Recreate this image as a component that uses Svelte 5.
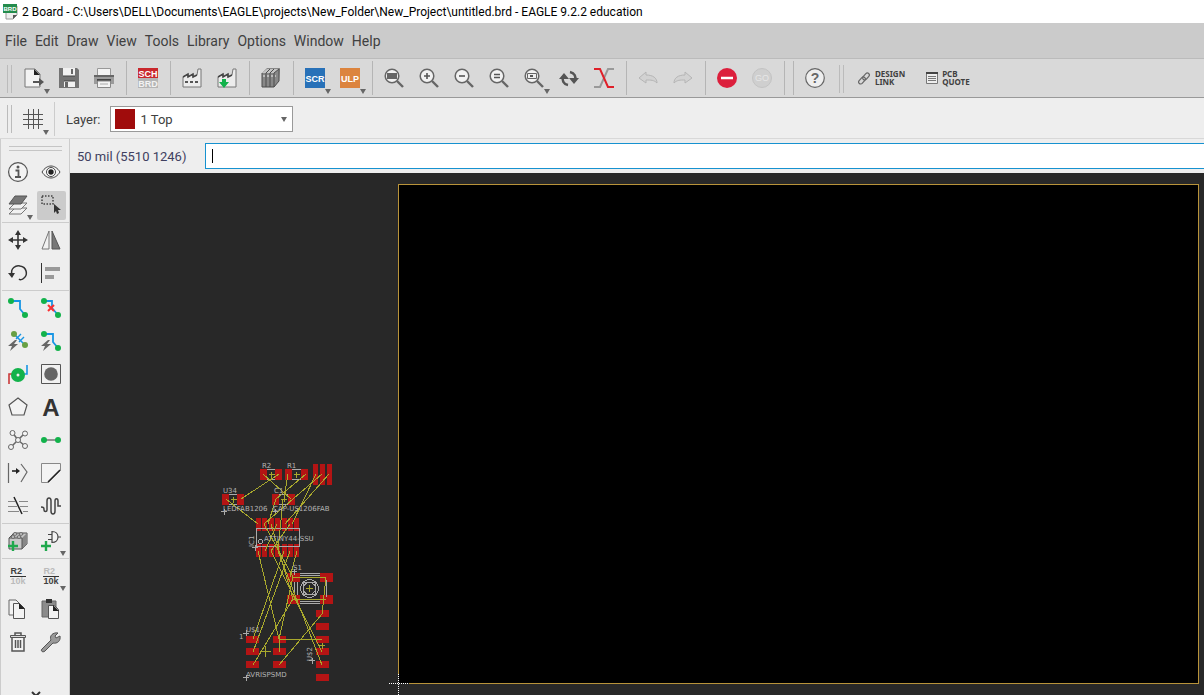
<script>
    const lens = '<circle cx="8" cy="8" r="6.8" fill="#f2f2f2" stroke="#666" stroke-width="1.5"/><path d="M13 13l6 6" stroke="#666" stroke-width="2.4"/>'
    const dot = (x, y, r = 3) => `<circle cx="${x}" cy="${y}" r="${r}" fill="#12b24b"/>`
    const plus = (x, y) => `<path d="M${x - 5} ${y}h10M${x} ${y - 5}v10" stroke="#1fa84c" stroke-width="2.4"/>`
    const bolt = '<path d="M7 9L0 15h4l-2 5 8-7H6l3-4z" fill="#666"/>'
    const factory = '<path d="M1 19V9l5-3v3l5-3v3l4-2 1-6h3v18z" fill="#ececec" stroke="#777"/><path d="M1 9l5-3v3l5-3v3l4-2" fill="none" stroke="#444" stroke-width="1.5"/>'
    const label = (x, y, size, fill, text) =>
        `<text x="${x}" y="${y}" font-size="${size}" font-weight="bold" font-family="Liberation Sans, sans-serif" text-anchor="middle" fill="${fill}">${text}</text>`

    const icons = {
        open: '<path d="M1 1h10l5 5v13H1z" fill="#f3f3f3" stroke="#777"/><path d="M10 1l6 6h-6z" fill="#222"/><path d="M9 14h7" stroke="#555" stroke-width="2"/><path d="M15 10l5 4-5 4z" fill="#555"/>',
        save: '<path d="M0 0h18l2 2v18H0z" fill="#737373"/><path d="M4 0h12v8H4zM5 13h11v6H5z" fill="#f1f1f1"/><path d="M4 8h12M5 13h11" stroke="#444"/><path d="M12 1h2v5h-2zM6 14h3v5H6z" fill="#666"/>',
        print: '<path d="M3.5.5h13v7h-13z" fill="#f3f3f3" stroke="#999"/><path d="M0 7h20v9H0z" fill="#9b9b9b"/><path d="M0 7h20v2H0z" fill="#666"/><path d="M3 11h14v2H3z" fill="#444"/><path d="M3.5 13h13v6.5h-13z" fill="#f3f3f3" stroke="#888"/><path d="M6 16h8" stroke="#aaa"/>',
        switch: `<path d="M0 0h20v10H0z" fill="#c9282d"/><path d="M0 10h20v10H0z" fill="#b5b5b5"/>${label(10, 8.5, 9, '#fff', 'SCH')}${label(10, 18.5, 9, '#f2f2f2', 'BRD')}`,
        cam: `${factory}<path d="M3 14h3m2 0h3m2 0h3" stroke="#555" stroke-width="2"/>`,
        fab: `${factory}<path d="M5 11h4v3h3l-5 6-5-6h3z" fill="#12b24b"/>`,
        library: '<path d="M1 5l5-5h13l-1 13-5 6H1z" fill="#888"/><path d="M1 5l5-4h12l-5 4z" fill="#c4c4c4"/><path d="M1 5v14h12l5-6V1M5 5v14M9 5v14M13 5v14M5 5l4-4M9 5l4-4M13 5l5-4" fill="none" stroke="#4d4d4d"/><path d="M2 8h2m2 0h2m2 0h2m2 0h1" stroke="#eee"/>',
        scr: `<path d="M0 0h20v20H0z" fill="#2871b8"/>${label(10, 13.5, 9, '#fff', 'SCR')}`,
        ulp: `<path d="M0 0h20v20H0z" fill="#dc843e"/>${label(10, 13.5, 9, '#fff', 'ULP')}`,
        zoomFit: `${lens}<path d="M3 5h10v6H3z" fill="#666"/>`,
        zoomIn: `${lens}<path d="M5 8h6M8 5v6" stroke="#555" stroke-width="1.6"/>`,
        zoomOut: `${lens}<path d="M5 8h6" stroke="#555" stroke-width="1.6"/>`,
        redraw: `${lens}<path d="M5 6.5h6M5 9.5h6" stroke="#555" stroke-width="1.4"/>`,
        zoomSelect: `${lens}<path d="M3.5 5.5h9v5h-9z" fill="#eee" stroke="#666"/><path d="M6 7h3v2H6z" fill="#555"/>`,
        refresh: '<path d="M9 17c-5-1-6-5-5-8M11 4c5 1 6 5 5 8" fill="none" stroke="#555" stroke-width="2.6"/><path d="M0 11l5-6 5 6zM10 10h10l-5 6z" fill="#555"/>',
        cross: '<path d="M0 19h6l8-18h6" fill="none" stroke="#999" stroke-width="2"/><path d="M0 1h6l8 18h6" fill="none" stroke="#df2029" stroke-width="2"/>',
        undo: '<path d="M1 10l7-6v3c7 0 11 3 11 8-3-3-6-3-11-3v3z" fill="#d2d2d2" stroke="#b5b5b5"/>',
        redo: '<path d="M19 10l-7-6v3C5 7 1 10 1 15c3-3 6-3 11-3v3z" fill="#d2d2d2" stroke="#b5b5b5"/>',
        stop: '<circle cx="10" cy="10" r="10" fill="#dc1f3c"/><path d="M4 10h12" stroke="#fff" stroke-width="2.5"/>',
        go: '<circle cx="10" cy="10" r="9.5" fill="#cfcfcf" stroke="#c3c3c3"/><text x="10" y="13" font-size="9" font-family="Liberation Sans, sans-serif" text-anchor="middle" fill="#e6e6e6">GO</text>',
        help: `<circle cx="10" cy="10" r="9.3" fill="#eee" stroke="#666" stroke-width="1.2"/>${label(10, 15, 14, '#666', '?')}`,
        link: '<g fill="none" stroke="#666" stroke-width="1.2"><rect x="4" y="6.5" width="8" height="4" rx="2" transform="rotate(-48 8 8.5)"/><rect x="0" y="10.5" width="8" height="4" rx="2" transform="rotate(-48 4 12.5)"/></g>',
        quote: '<path d="M1.5 4.5h11v11h-11z" fill="#eee" stroke="#777"/><path d="M1 5h12" stroke="#444" stroke-width="2"/><path d="M3 8.5h8M3 10.5h8M3 12.5h8" stroke="#777"/>',
        grid: '<path d="M5.5 0v20M10.5 0v20M15.5 0v20M0 5.5h20M0 10.5h20M0 15.5h20" stroke="#555"/>',
        info: '<circle cx="10" cy="10" r="9.4" fill="#f3f3f3" stroke="#555" stroke-width="1.2"/><circle cx="10" cy="5" r="1.5" fill="#555"/><path d="M7.5 8.5h3v6M7 15h6" fill="none" stroke="#555" stroke-width="1.8"/>',
        show: '<path d="M1 10c5-8 13-8 18 0-5 8-13 8-18 0z" fill="#f3f3f3" stroke="#444"/><circle cx="10" cy="10" r="4.5" fill="#fff" stroke="#444"/><circle cx="10" cy="10" r="2.7" fill="#222"/>',
        layers: '<g fill="#f1f1f1" stroke="#777"><path d="M1 19l6-6h12l-6 6z"/><path d="M1 14l6-6h12l-6 6z"/></g><path d="M1 9l6-8h12l-6 8z" fill="#777" stroke="#555"/>',
        group: '<path d="M1 1h11v8H1z" fill="none" stroke="#444" stroke-width="1.5" stroke-dasharray="1.5 1.5"/><path d="M13 9v9l2-2 1 3 2-1-1-3h3z" fill="#333"/>',
        move: '<path d="M10 3v14M3 10h14" stroke="#333" stroke-width="1.6"/><path d="M10 0l3 5H7zM10 20l3-5H7zM0 10l5-3v6zM20 10l-5-3v6z" fill="#333"/>',
        mirror: '<path d="M8 1v18H1z" fill="#f1f1f1" stroke="#777"/><path d="M11 1v18h8z" fill="#777" stroke="#555"/>',
        rotate: '<path d="M4 12C2 5 8 2 12 3c7 1 8 9 4 12-2 2-4 2-5 1" fill="none" stroke="#333" stroke-width="1.5"/><path d="M0 10h7l-3 5z" fill="#333"/>',
        align: '<path d="M.5 0v20" stroke="#333"/><path d="M4 4h15v4H4zM4 12h9v4H4z" fill="#999"/>',
        route: `<path d="M3 3h9v8l5 6" fill="none" stroke="#1795e4" stroke-width="1.8"/>${dot(3, 3)}${dot(17, 17)}`,
        ripup: `<path d="M3 3h8v7l6 7" fill="none" stroke="#1795e4" stroke-width="1.8"/>${dot(3, 3)}${dot(17, 17)}<path d="M7 7l6 6m0-6l-6 6" stroke="#fa3032" stroke-width="2"/>`,
        ripupAuto: `<path d="M6 3l11 11" stroke="#1795e4" stroke-width="1.5"/><path d="M8 8l5-5M11 11l5-5" stroke="#1795e4" stroke-width="1.4"/>${bolt}<circle cx="6" cy="3" r="3" fill="#68a044"/><circle cx="17" cy="14" r="3" fill="#68a044"/>`,
        routeAuto: `<path d="M3 3h9v8l5 6" fill="none" stroke="#1795e4" stroke-width="1.8"/>${bolt}${dot(3, 3)}${dot(17, 17)}`,
        via: '<path d="M1 20V10h6" fill="none" stroke="#ca3939" stroke-width="1.6"/><path d="M19 1v9h-6" fill="none" stroke="#1795e4" stroke-width="1.6"/><circle cx="10" cy="11" r="7" fill="#12b24b"/><circle cx="10" cy="11" r="1.5" fill="#eee"/>',
        hole: '<path d="M.5.5h19v19H.5z" fill="#f1f1f1" stroke="#555"/><circle cx="10" cy="10" r="6.8" fill="#666"/>',
        polygon: '<path d="M10 1l9 7-3 10H4L1 8z" fill="#f3f3f3" stroke="#555" stroke-width="1.2"/>',
        text: label(10, 19, 24, '#333', 'A'),
        ratsnest: '<path d="M4 2l6 8L3 17M17 3l-7 7 7 6" fill="none" stroke="#666" stroke-width="1.5"/><g fill="#f3f3f3" stroke="#666"><circle cx="4.5" cy="3" r="2.5"/><circle cx="17" cy="3.5" r="2.5"/><circle cx="10" cy="10" r="2.5"/><circle cx="3" cy="17" r="2.5"/><circle cx="17" cy="16" r="2.5"/></g>',
        airwire: `<path d="M3 10h14" stroke="#888" stroke-width="1.8"/>${dot(3, 10)}${dot(17, 10)}`,
        optimize: '<path d="M.5 0v20M13 1l6 8-6 10" fill="none" stroke="#666" stroke-width="1.2"/><path d="M4 8h5" stroke="#222" stroke-width="1.6"/><path d="M8 5l4 3-4 3z" fill="#222"/>',
        miter: '<path d="M.5.5h19v7l-12 12h-7z" fill="#f3f3f3" stroke="#888"/><path d="M19 7L7 19" stroke="#222" stroke-width="1.5"/>',
        split: '<path d="M0 5.5h7m4 0h9M0 10.5h9m3 0h8M0 15.5h11m4 0h5" stroke="#888"/><path d="M6 1l8 17" stroke="#222" stroke-width="1.5"/>',
        meander: '<path d="M0 11c3 0 3 1 3 3s3 2 3 0V5c0-4 4-4 4 0v10c0 4 4 4 4 0V5c0-3 3-3 3 0v5h3" fill="none" stroke="#444" stroke-width="1.5"/>',
        part: `<path d="M1 7l5-5h13v11l-5 5H1z" fill="#c8c8c8" stroke="#555"/><path d="M14 7l5-5v11l-5 5z" fill="#888"/><path d="M1 7h13v11" fill="none" stroke="#555"/><g fill="#eee" stroke="#555"><ellipse cx="7" cy="3" rx="2" ry="1.2"/><ellipse cx="13" cy="3" rx="2" ry="1.2"/><ellipse cx="5" cy="6" rx="2" ry="1.2"/><ellipse cx="11" cy="6" rx="2" ry="1.2"/></g>${plus(5, 15)}`,
        gate: `<path d="M11 .5c8 0 8 11 0 11zM7 3.5h4M7 8.5h4M17 6h3" fill="#f3f3f3" stroke="#444" stroke-width="1.2"/>${plus(5, 15)}`,
        copy: '<path d="M1 1h7l3 3v12H1z" fill="#f3f3f3" stroke="#666"/><path d="M5.5 4.5h6l5 5v10h-11z" fill="#f3f3f3" stroke="#555"/><path d="M11 4l6 6h-6z" fill="#222"/>',
        paste: '<path d="M1 2h14v16H1z" fill="#8b8b8b" stroke="#666"/><path d="M5 0h6v4H5z" fill="#333"/><path d="M7.5 6.5h6l4 4v9h-10z" fill="#f3f3f3" stroke="#555"/><path d="M12 6l6 6h-6z" fill="#222"/>',
        trash: '<path d="M4 6v13h12V6" fill="#f3f3f3" stroke="#555" stroke-width="1.5"/><path d="M2.5 3.5h15v2h-15z" fill="#ddd" stroke="#555"/><path d="M7 3V1h6v2M7.5 8v8M10 8v8M12.5 8v8" fill="none" stroke="#555" stroke-width="1.5"/>',
        wrench: '<path d="M1 17l9-9C8 4 12 0 17 1l-3 3 1 2 4-2c1 5-3 8-7 7l-8 8c-2 2-5 0-3-2z" fill="#999" stroke="#555"/>',
    }

    const menus = ['File', 'Edit', 'Draw', 'View', 'Tools', 'Library', 'Options', 'Window', 'Help']

    const toolGroups = [
        ['open', 'save', 'print'],
        ['switch'],
        ['cam', 'fab'],
        ['library'],
        ['scr', 'ulp'],
        ['zoomFit', 'zoomIn', 'zoomOut', 'redraw', 'zoomSelect', 'refresh', 'cross'],
        ['undo', 'redo'],
        ['stop', 'go'],
        [],
        ['help'],
    ]

    const sideGroups = [
        ['info', 'show', 'layers', 'group'],
        ['move', 'mirror', 'rotate', 'align'],
        ['route', 'ripup', 'ripupAuto', 'routeAuto', 'via', 'hole', 'polygon', 'text', 'ratsnest', 'airwire', 'optimize', 'miter', 'split', 'meander'],
        ['part', 'gate'],
        ['name', 'value', 'copy', 'paste', 'trash', 'wrench'],
    ]

    const withMenu = ['open', 'scr', 'ulp', 'zoomSelect', 'layers', 'gate', 'value']

    let activeTool = 'group'
    let command = ''
    let layer = '1 Top'

    // pads: x, y, width, height
    const pads = [
        [260, 469, 7, 11], [275, 469, 7, 11], [285, 469, 7, 11], [301, 469, 7, 11],
        [313, 464, 5, 21], [320, 464, 5, 21], [327, 464, 5, 21],
        [222, 494, 7, 11], [237, 494, 7, 11], [272, 494, 7, 11], [288, 494, 7, 11],
        [287, 573, 13, 9], [320, 573, 13, 9], [287, 595, 13, 9], [320, 595, 13, 9],
    ]
    for (let i = 0; i < 7; i++) {
        const x = 256 + Math.round(i * 6.4)
        pads.push([x, 518, 5, 13], [x, 544, 5, 13])
    }
    for (const y of [610, 623, 636, 648, 661, 674]) pads.push([316, y, 13, 7])
    for (const y of [636, 648, 661]) pads.push([246, y, 13, 7], [273, y, 13, 7])

    const airwires = [
        'M263 474L291 499', 'M279 474L241 499', 'M288 474L284 499', 'M306 474L276 499',
        'M316 474L292 524', 'M322 474L264 524', 'M329 474L285 524',
        'M226 499L258 524', 'M276 499L268 524', 'M283 499L278 551',
        'M264 524L293 577', 'M271 524L293 599', 'M277 524L265 551', 'M290 524L271 551',
        'M258 551L279 639', 'M284 551L253 639', 'M290 551L253 652', 'M297 551L290 577',
        'M271 551L322 652', 'M278 551L322 665', 'M293 577L279 639L279 652',
        'M293 599L253 665', 'M322 614L279 665', 'M279 639L322 639',
        'M326 577L322 614', 'M293 577L326 577', 'M293 599L326 599',
    ]

    const names = [
        [262, 468, 'R2'], [287, 468, 'R1'], [223, 493, 'U34'], [274, 493, 'C1'],
        [223, 511, 'LEDFAB1206'], [273, 511, 'CAP-US1206FAB'], [264, 541, 'ATTINY44-SSU'],
        [293, 570, 'S1'], [246, 632, 'U$1'], [239, 639, '1'], [246, 677, 'AVRISPSMD'],
    ]
</script>

{#snippet tool(name)}
    <button class="tool" class:active={activeTool === name} aria-label={name} on:click={() => (activeTool = name)}>
        {#if name === 'name' || name === 'value'}
            <span class="fraction {name}"><b>R2</b><b>10k</b></span>
        {:else}
            <svg viewBox="0 0 20 20">{@html icons[name]}</svg>
        {/if}
        {#if withMenu.includes(name)}<i class="arrow"></i>{/if}
    </button>
{/snippet}

<div class="window">
    <header class="title">
        <svg viewBox="0 0 16 16">
            <path d="M3 2h11v9l-4 4H3z" fill="#eee" stroke="#999" />
            <path d="M10 15v-4h4z" fill="#555" />
            <rect width="14" height="9" fill="#248c4d" />
            <text x="7" y="7" font-size="6" font-weight="bold" text-anchor="middle" fill="#fff">BRD</text>
        </svg>
        <span>2 Board - C:\Users\DELL\Documents\EAGLE\projects\New_Folder\New_Project\untitled.brd - EAGLE 9.2.2 education</span>
    </header>

    <nav class="menu">
        {#each menus as item}
            <button>{item}</button>
        {/each}
    </nav>

    <div class="toolbar">
        <div class="handle"></div>
        {#each toolGroups as group}
            <div class="tools">
                {#each group as name}{@render tool(name)}{/each}
            </div>
        {/each}
        <div class="handle services"></div>
        <button class="service">
            <svg viewBox="0 0 14 20">{@html icons.link}</svg>
            <span>DESIGN<br />LINK</span>
        </button>
        <button class="service">
            <svg viewBox="0 0 14 20">{@html icons.quote}</svg>
            <span>PCB<br />QUOTE</span>
        </button>
    </div>

    <div class="options">
        <div class="handle"></div>
        <button class="tool" aria-label="grid">
            <svg viewBox="0 0 20 20">{@html icons.grid}</svg>
            <i class="arrow"></i>
        </button>
        <div class="divider"></div>
        <label for="layer">Layer:</label>
        <div class="layer">
            <select id="layer" bind:value={layer}>
                <option>1 Top</option>
            </select>
            <i class="swatch"></i>
            <i class="arrow"></i>
        </div>
    </div>

    <div class="main">
        <aside class="sidebar">
            <div class="grip"></div>
            {#each sideGroups as group}
                <div class="side-tools">
                    {#each group as name}{@render tool(name)}{/each}
                </div>
            {/each}
            <button class="more" aria-label="more">
                <svg viewBox="0 0 10 6"><path d="M1 1l4 4 4-4" fill="none" stroke="#333" stroke-width="2" /></svg>
            </button>
        </aside>

        <div class="editor">
            <div class="command">
                <label for="command">50 mil (5510 1246)</label>
                <div class="line">
                    <input id="command" type="text" autocomplete="off" bind:value={command} />
                    {#if !command}<i class="caret"></i>{/if}
                </div>
            </div>

            <div class="canvas">
                <svg class="board" viewBox="70 173 1134 522" preserveAspectRatio="xMinYMin meet">
                    <rect x="398.5" y="184.5" width="800" height="499" fill="#000" stroke="#b8933a" />
                    <path d="M389 683.5h20M398.5 674v21" stroke="#282828" />
                    <path d="M389 683.5h20M398.5 674v21" stroke="#fff" stroke-dasharray="1 1" />

                    {#each pads as [x, y, width, height]}
                        <rect class="pad" {x} {y} {width} {height} />
                    {/each}
                    <g class="outline">
                        <path d="M267 469.5h8M267 479.5h8M292 469.5h9M292 479.5h9M229 494.5h8M229 504.5h8M279 494.5h9M279 504.5h9" />
                        <rect x="256.5" y="528.5" width="43" height="18" />
                        <circle cx="260.5" cy="541.5" r="2" />
                        <path d="M297.5 582v13M294.5 582v13M326.5 580v17M300 573.5h20M300 575.5h20M300 601.5h20M300 603.5h20" />
                        <circle cx="309.5" cy="588.5" r="9" />
                        <circle cx="309.5" cy="588.5" r="6" />
                        <rect x="303.5" y="582.5" width="12" height="12" />
                        <path d="M221 511.5h6M224.5 509v6M272 511.5h6M275.5 509v6M252 547.5h6M255.5 545v6M291 571.5h6M294.5 569v6M243 633.5h6M246.5 630v6M243 677.5h6M246.5 675v6M309 660.5h6M312.5 658v6" />
                    </g>
                    <g class="wires">
                        {#each airwires as d}<path {d} />{/each}
                    </g>
                    <path class="origins" d="M269 474.5h6M271.5 472v6M294 474.5h6M296.5 472v6M231 499.5h6M233.5 497v6M281 499.5h6M284.5 496v6M260 651.5h11M265.5 646v11M319 645.5h6M322.5 643v6M306 588.5h7M309.5 585v7" />
                    <g class="names">
                        {#each names as [x, y, name]}<text {x} {y}>{name}</text>{/each}
                        <text transform="translate(254 547) rotate(-90)">IC1</text>
                        <text transform="translate(312 661) rotate(-90)">U$2</text>
                    </g>
                </svg>
            </div>
        </div>
    </div>
</div>

<style>
    :global(body) {
        margin: 0;
        overflow: hidden;
    }
    .window {
        display: flex;
        flex-direction: column;
        height: 100vh;
        background-color: #eee;
        color: #404040;
        font-family: Roboto, 'Noto Sans', sans-serif;
        font-size: 13px;
    }
    button {
        padding: 0;
        border: none;
        background: none;
        color: inherit;
        font-family: inherit;
    }
    svg {
        display: block;
    }
    .title {
        display: flex;
        align-items: center;
        gap: 3px;
        height: 23px;
        padding-left: 3px;
        background-color: white;
        color: #000;
        font-size: 12px;
        white-space: nowrap;
    }
    .title svg {
        width: 16px;
        height: 16px;
        font-family: 'Liberation Sans', sans-serif;
    }
    .menu {
        display: flex;
        align-items: center;
        gap: 8px;
        height: 35px;
        padding-left: 5px;
        background-color: #cbcbcb;
        border-bottom: 1px solid #bbb;
    }
    .menu button {
        font-size: 14px;
    }
    .toolbar {
        display: flex;
        height: 38px;
        background-color: #d9d9d9;
        border-bottom: 1px solid #999;
    }
    .handle {
        width: 3px;
        margin: 6px 12px 4px 7px;
        border-left: 1px solid #bbb;
        border-right: 1px solid #bbb;
    }
    .services {
        margin-left: 2px;
        margin-right: 14px;
    }
    .tools {
        display: flex;
        align-items: center;
        gap: 15px;
        margin: 2px 0;
        padding: 0 12px 0 11px;
        border-left: 1px solid #b5b5b5;
    }
    .tools:nth-child(2) {
        padding-left: 0;
        border-left: none;
    }
    .tools:empty {
        padding: 0 8px 0 0;
    }
    .tool {
        position: relative;
        width: 20px;
        height: 20px;
    }
    .tool svg {
        width: 20px;
        height: 20px;
        overflow: visible;
    }
    .arrow {
        position: absolute;
        right: -6px;
        bottom: -6px;
        border: 3px solid transparent;
        border-top: 5px solid #666;
        border-bottom: none;
    }
    .service {
        display: flex;
        align-items: center;
        gap: 3px;
        margin-right: 20px;
        text-align: left;
        font-family: 'Noto Sans', sans-serif;
        font-size: 8px;
        font-weight: bold;
        line-height: 8px;
    }
    .service svg {
        width: 14px;
        height: 20px;
    }
    .options {
        display: flex;
        align-items: center;
        height: 38px;
        padding-top: 2px;
        border-bottom: 1px solid #d8d8d8;
    }
    .options .handle {
        height: 28px;
        margin: 0 11px 0 7px;
    }
    .divider {
        height: 34px;
        margin: 0 11px;
        border-left: 1px solid #ccc;
    }
    .layer {
        position: relative;
        margin-left: 9px;
    }
    .layer select {
        display: block;
        appearance: none;
        width: 183px;
        height: 26px;
        padding: 0 20px 0 30px;
        border: 1px solid #999;
        border-radius: 0;
        background-color: white;
        color: #404040;
        font-family: inherit;
        font-size: 13px;
    }
    .swatch {
        position: absolute;
        top: 3px;
        left: 5px;
        width: 20px;
        height: 20px;
        background-color: #a00c0c;
    }
    .layer .arrow {
        right: 6px;
        bottom: 10px;
    }
    .main {
        display: flex;
        flex: 1;
        min-height: 0;
    }
    .sidebar {
        box-sizing: border-box;
        flex: none;
        width: 70px;
        padding-left: 1px;
        overflow: hidden;
        border-left: 1px solid #ccc;
        border-right: 1px solid #ccc;
    }
    .grip {
        height: 3px;
        margin: 7px 7px 5px;
        border-top: 1px solid #c5c5c5;
        border-bottom: 1px solid #c5c5c5;
    }
    .side-tools {
        display: grid;
        grid-template-columns: 33px 33px;
        grid-auto-rows: 33px;
    }
    .side-tools + .side-tools {
        padding-top: 1px;
        border-top: 1px solid #ccc;
    }
    .side-tools .tool {
        display: flex;
        align-items: center;
        justify-content: center;
        box-sizing: border-box;
        width: 29px;
        height: 29px;
        margin: 2px;
        padding: 0 1px 1px 0;
        border-radius: 2px;
    }
    .side-tools .active {
        background-color: #cbcbcb;
    }
    .side-tools .arrow {
        right: 0;
        bottom: 0;
    }
    .fraction {
        font-family: 'Liberation Sans', sans-serif;
        font-size: 9px;
        line-height: 9px;
        text-align: left;
    }
    .fraction b {
        display: block;
    }
    .fraction b:first-child {
        border-bottom: 1px solid #333;
    }
    .name b:last-child,
    .value b:first-child {
        color: #bbb;
    }
    .more {
        display: block;
        margin: 32px auto 0;
    }
    .more svg {
        width: 10px;
        height: 6px;
    }
    .editor {
        display: flex;
        flex: 1;
        flex-direction: column;
        min-width: 0;
    }
    .command {
        display: flex;
        align-items: center;
        height: 34px;
    }
    .command label {
        width: 128px;
        padding-left: 7px;
        color: #404060;
        white-space: nowrap;
    }
    .line {
        position: relative;
        flex: 1;
    }
    .line input {
        display: block;
        box-sizing: border-box;
        width: 100%;
        height: 26px;
        padding: 0 6px;
        border: 1px solid #1692d0;
        border-right: none;
        border-radius: 0;
        outline: none;
        background-color: white;
        font-family: inherit;
        font-size: 13px;
    }
    .caret {
        position: absolute;
        top: 6px;
        left: 7px;
        height: 14px;
        border-left: 1px solid #000;
    }
    .canvas {
        flex: 1;
        min-height: 0;
        background-color: #282828;
    }
    .board {
        width: 100%;
        height: 100%;
        shape-rendering: crispEdges;
    }
    .outline {
        fill: none;
        stroke: #aaa;
    }
    .pad {
        fill: #b41414;
    }
    .wires,
    .origins {
        fill: none;
        stroke: #a9a92d;
    }
    .names {
        fill: #b4b4b4;
        font-family: 'DejaVu Sans', sans-serif;
        font-size: 7px;
    }
</style>
